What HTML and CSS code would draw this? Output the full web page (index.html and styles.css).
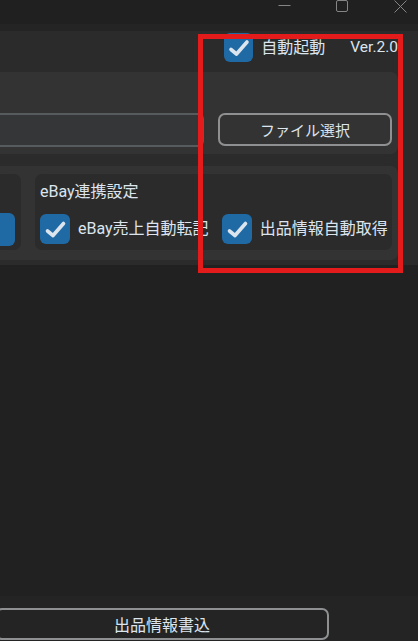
FILE: index.html
```html
<!DOCTYPE html>
<html lang="ja">
<head>
    <meta charset="UTF-8">
    <meta name="viewport" content="width=device-width, initial-scale=1.0">
    <title>出品ツール</title>
    <link rel="stylesheet" href="styles.css">
</head>
<body>
    <div class="titlebar">
        <div class="win-controls">
            <span class="win-btn">
                <svg width="13" height="12" viewBox="0 0 13 12"><path d="M0.5 5.5 H12.5" stroke="#858585" stroke-width="1"/></svg>
            </span>
            <span class="win-btn">
                <svg width="12" height="12" viewBox="0 0 12 12"><rect x="0.5" y="0.5" width="11" height="11" rx="1.5" fill="none" stroke="#858585" stroke-width="1"/></svg>
            </span>
            <span class="win-btn">
                <svg width="13" height="13" viewBox="0 0 13 13"><path d="M0.5 0.5 L12.5 12.5 M12.5 0.5 L0.5 12.5" stroke="#858585" stroke-width="1"/></svg>
            </span>
        </div>
    </div>

    <div class="main">
        <div class="header">
            <label class="check">
                <span class="box box-sm">
                    <svg viewBox="0 0 29 29"><path d="M7 16.5 L12.5 21 L23 9" fill="none" stroke="#dce4ee" stroke-width="3.6" stroke-linecap="round" stroke-linejoin="round"/></svg>
                </span>
                <span class="check-label">自動起動</span>
            </label>
            <span class="version">Ver.2.0</span>
        </div>

        <div class="panel file-panel">
            <div class="entry"></div>
            <button class="outline-btn select-btn">ファイル選択</button>
        </div>

        <div class="panel settings-panel">
            <div class="group group-left">
                <div class="blue-btn"></div>
            </div>
            <div class="group group-ebay">
                <div class="group-title">eBay連携設定</div>
                <div class="group-row">
                    <label class="check">
                        <span class="box">
                            <svg viewBox="0 0 30 30"><path d="M7.5 17 L13 21.5 L23.5 9.5" fill="none" stroke="#dce4ee" stroke-width="3.6" stroke-linecap="round" stroke-linejoin="round"/></svg>
                        </span>
                        <span class="check-label">eBay売上自動転記</span>
                    </label>
                    <label class="check">
                        <span class="box">
                            <svg viewBox="0 0 30 30"><path d="M7.5 17 L13 21.5 L23.5 9.5" fill="none" stroke="#dce4ee" stroke-width="3.6" stroke-linecap="round" stroke-linejoin="round"/></svg>
                        </span>
                        <span class="check-label">出品情報自動取得</span>
                    </label>
                </div>
            </div>
        </div>
    </div>

    <div class="log"></div>

    <div class="footer">
        <button class="outline-btn write-btn">出品情報書込</button>
    </div>

    <div class="highlight"></div>
</body>
</html>
```

FILE: styles.css
```css
body {
    margin: 0;
    width: 418px;
    height: 641px;
    overflow: hidden;
    position: relative;
    background-color: #242424;
    color: #dce4ee;
    font-family: Roboto, "Noto Sans CJK JP", sans-serif;
    font-size: 16px;
}

.titlebar {
    height: 24px;
    background-color: #202020;
    display: flex;
    justify-content: flex-end;
}

.win-controls {
    display: flex;
    margin-right: -11px;
}

.win-btn {
    width: 58px;
    height: 13px;
    display: flex;
    justify-content: center;
    align-items: flex-start;
}

.win-btn svg {
    display: block;
}

.main {
    margin-top: 7px;
    background-color: #2b2b2b;
    padding: 0 20px 5px 0;
}

.header {
    height: 41px;
    box-sizing: border-box;
    padding-top: 2px;
    display: flex;
    justify-content: flex-end;
    align-items: flex-start;
}

.check {
    display: flex;
    align-items: center;
    gap: 8px;
}

.box {
    width: 30px;
    height: 30px;
    border-radius: 6px;
    background-color: #1f6aa5;
    flex-shrink: 0;
}

.box svg {
    display: block;
    width: 100%;
    height: 100%;
}

.box-sm {
    width: 29px;
    height: 29px;
}

.check-label {
    line-height: 20px;
    white-space: nowrap;
}

.version {
    margin-left: 25px;
    line-height: 29px;
    font-size: 15.5px;
}

.panel {
    background-color: #333333;
    border-radius: 7px;
    margin-left: -20px;
}

.file-panel {
    height: 82px;
    box-sizing: border-box;
    padding: 41px 6px 0 0;
    display: flex;
    align-items: flex-start;
    gap: 14px;
}

.entry {
    flex: 1;
    height: 34px;
    box-sizing: border-box;
    border: 2px solid #565b5e;
    border-radius: 6px;
    background-color: #343638;
}

.outline-btn {
    background-color: transparent;
    border: 2px solid #8f9092;
    border-radius: 7px;
    color: #dce4ee;
    font-family: Roboto, "Noto Sans CJK JP", sans-serif;
    font-size: 15px;
    padding: 0;
    box-sizing: border-box;
}

.select-btn {
    width: 174px;
    height: 33px;
}

.settings-panel {
    margin-top: 12px;
    height: 94px;
    box-sizing: border-box;
    padding: 8px 6px 10px 0;
    display: flex;
    gap: 14px;
}

.group {
    background-color: #2b2b2b;
    border-radius: 7px;
}

.group-left {
    width: 41px;
    box-sizing: border-box;
    padding: 39px 6px 0 0;
}

.blue-btn {
    height: 33px;
    border-radius: 6px;
    background-color: #1f6aa5;
}

.group-ebay {
    flex: 1;
    padding: 8px 0 0 5px;
}

.group-title {
    line-height: 20px;
}

.group-row {
    margin-top: 12px;
    display: flex;
    align-items: center;
    gap: 13px;
}

.log {
    height: 331px;
    background-color: #212121;
}

.footer {
    height: 45px;
    overflow: hidden;
}

.write-btn {
    display: block;
    margin: 12px 0 0 -5px;
    width: 334px;
    height: 32px;
    font-size: 16px;
}

.highlight {
    position: absolute;
    left: 198px;
    top: 34px;
    width: 205px;
    height: 239px;
    box-sizing: border-box;
    border: 5px solid #e31b1b;
    pointer-events: none;
}
```
